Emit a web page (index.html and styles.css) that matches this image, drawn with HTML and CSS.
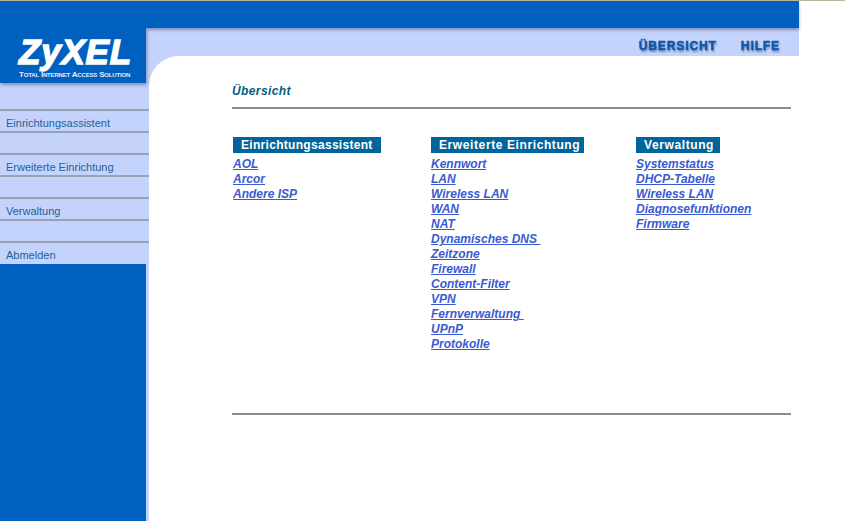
FILE: index.html
```html
<!DOCTYPE html>
<html lang="de">

<head>
    <meta charset="UTF-8">
    <title>ZyXEL - Übersicht</title>
    <link rel="stylesheet" href="styles.css">
</head>

<body>

    <div class="page">
        <div class="top-bar"></div>

        <div class="layout">
            <!-- Left side: logo and menu -->
            <div class="side">
                <div class="logo">
                    <div class="logo-name">ZyXEL</div>
                    <div class="logo-claim">Total Internet Access Solution</div>
                </div>

                <div class="menu">
                    <a class="menu-item" href="#">Einrichtungsassistent</a>
                    <div class="menu-item"></div>
                    <a class="menu-item" href="#">Erweiterte Einrichtung</a>
                    <div class="menu-item"></div>
                    <a class="menu-item" href="#">Verwaltung</a>
                    <div class="menu-item"></div>
                    <a class="menu-item" href="#">Abmelden</a>
                </div>

                <div class="side-fill"></div>
            </div>

            <div class="main">
                <div class="top-links">
                    <a href="#">ÜBERSICHT</a>
                    <a href="#">HILFE</a>
                </div>

                <div class="content">
                    <div class="page-title">Übersicht</div>

                    <div class="columns">
                        <div class="column col-setup">
                            <div class="column-head head-setup">Einrichtungsassistent</div>
                            <a href="#">AOL</a>
                            <a href="#">Arcor</a>
                            <a href="#">Andere ISP</a>
                        </div>

                        <div class="column col-advanced">
                            <div class="column-head head-advanced">Erweiterte Einrichtung</div>
                            <a href="#">Kennwort</a>
                            <a href="#">LAN</a>
                            <a href="#">Wireless LAN</a>
                            <a href="#">WAN</a>
                            <a href="#">NAT</a>
                            <a href="#">Dynamisches DNS&nbsp;</a>
                            <a href="#">Zeitzone</a>
                            <a href="#">Firewall</a>
                            <a href="#">Content-Filter</a>
                            <a href="#">VPN</a>
                            <a href="#">Fernverwaltung&nbsp;</a>
                            <a href="#">UPnP</a>
                            <a href="#">Protokolle</a>
                        </div>

                        <div class="column">
                            <div class="column-head head-admin">Verwaltung</div>
                            <a href="#">Systemstatus</a>
                            <a href="#">DHCP-Tabelle</a>
                            <a href="#">Wireless LAN</a>
                            <a href="#">Diagnosefunktionen</a>
                            <a href="#">Firmware</a>
                        </div>
                    </div>

                    <div class="bottom-rule"></div>
                </div>
            </div>
        </div>
    </div>

</body>

</html>
```

FILE: styles.css
```css
html, body {
    height: 100%;
}

body {
    margin: 0;
    background-color: #fff;
    font-family: "Liberation Sans", Arial, sans-serif;
    border-top: 1px solid #b8b4a0;
    box-sizing: border-box;
    overflow: hidden;
}

.page {
    width: 799px;
    height: 100%;
    display: flex;
    flex-direction: column;
}

.top-bar {
    height: 27px;
    background-color: #0060c0;
    position: relative;
    box-shadow: 0 2px 3px rgba(40, 60, 120, 0.45);
}

.layout {
    flex: 1;
    display: flex;
}

/* Left side */
.side {
    width: 149px;
    display: flex;
    flex-direction: column;
    background-color: #c4d3fb;
}

.logo {
    width: 146px;
    height: 55px;
    box-sizing: border-box;
    padding: 9px 0 0 19px;
    background-color: #0060c0;
    color: #fff;
    position: relative;
    box-shadow: 1px 2px 3px rgba(40, 60, 120, 0.45);
}

.logo-name {
    font-size: 35px;
    line-height: 30px;
    font-weight: bold;
    font-style: italic;
    letter-spacing: 0.8px;
    -webkit-text-stroke: 1.4px #fff;
}

.logo-claim {
    margin-top: 3px;
    font-size: 8px;
    line-height: 9px;
    font-weight: bold;
    font-variant: small-caps;
    white-space: nowrap;
    letter-spacing: -0.18px;
    color: #e4ebfa;
}

.menu {
    margin-top: 26px;
    padding-bottom: 1px;
}

.menu-item {
    display: block;
    height: 20px;
    box-sizing: content-box;
    padding-left: 6px;
    border-top: 2px solid #98a2b6;
    font-size: 11px;
    line-height: 25px;
    color: #1f5f99;
    text-decoration: none;
}

.side-fill {
    flex: 1;
    margin-right: 3px;
    background-color: #0060c0;
}

/* Right side */
.main {
    flex: 1;
    display: flex;
    flex-direction: column;
    background-color: #c4d3fb;
}

.top-links {
    height: 28px;
    display: flex;
    justify-content: flex-end;
    align-items: center;
    gap: 24px;
    padding: 8px 19px 0 0;
    box-sizing: border-box;
}

.top-links a {
    font-size: 12px;
    font-weight: bold;
    letter-spacing: 0.9px;
    color: #0a55a8;
    text-decoration: none;
    -webkit-text-stroke: 0.5px #0a55a8;
    text-shadow: 1px 2px 2px rgba(30, 70, 140, 0.6);
}

.content {
    flex: 1;
    background-color: #fff;
    border-top-left-radius: 30px;
    padding: 28px 8px 0 83px;
}

.page-title {
    height: 23px;
    border-bottom: 2px solid #8c8c8c;
    font-size: 12px;
    font-style: italic;
    font-weight: bold;
    line-height: 15px;
    letter-spacing: 0.4px;
    color: #005f80;
}

.columns {
    display: flex;
    height: 276px;
    padding: 28px 0 0 1px;
}

.column {
    display: flex;
    flex-direction: column;
    align-items: flex-start;
}

.col-setup {
    width: 198px;
}

.col-advanced {
    width: 205px;
}

.column a {
    font-size: 12px;
    line-height: 15px;
    font-weight: bold;
    font-style: italic;
    color: #3a5ad2;
    white-space: nowrap;
}

.column-head {
    height: 16px;
    margin-bottom: 4px;
    box-sizing: border-box;
    background-color: #00659c;
    color: #fff;
    font-size: 12px;
    font-weight: bold;
    line-height: 17px;
    letter-spacing: 0.6px;
    white-space: nowrap;
}

.head-setup {
    width: 148px;
    padding-left: 8px;
    letter-spacing: 0.3px;
}

.head-advanced {
    width: 153px;
    padding-left: 8px;
}

.head-admin {
    width: 84px;
    padding-left: 8px;
}

.bottom-rule {
    border-top: 2px solid #8c8c8c;
}
```
